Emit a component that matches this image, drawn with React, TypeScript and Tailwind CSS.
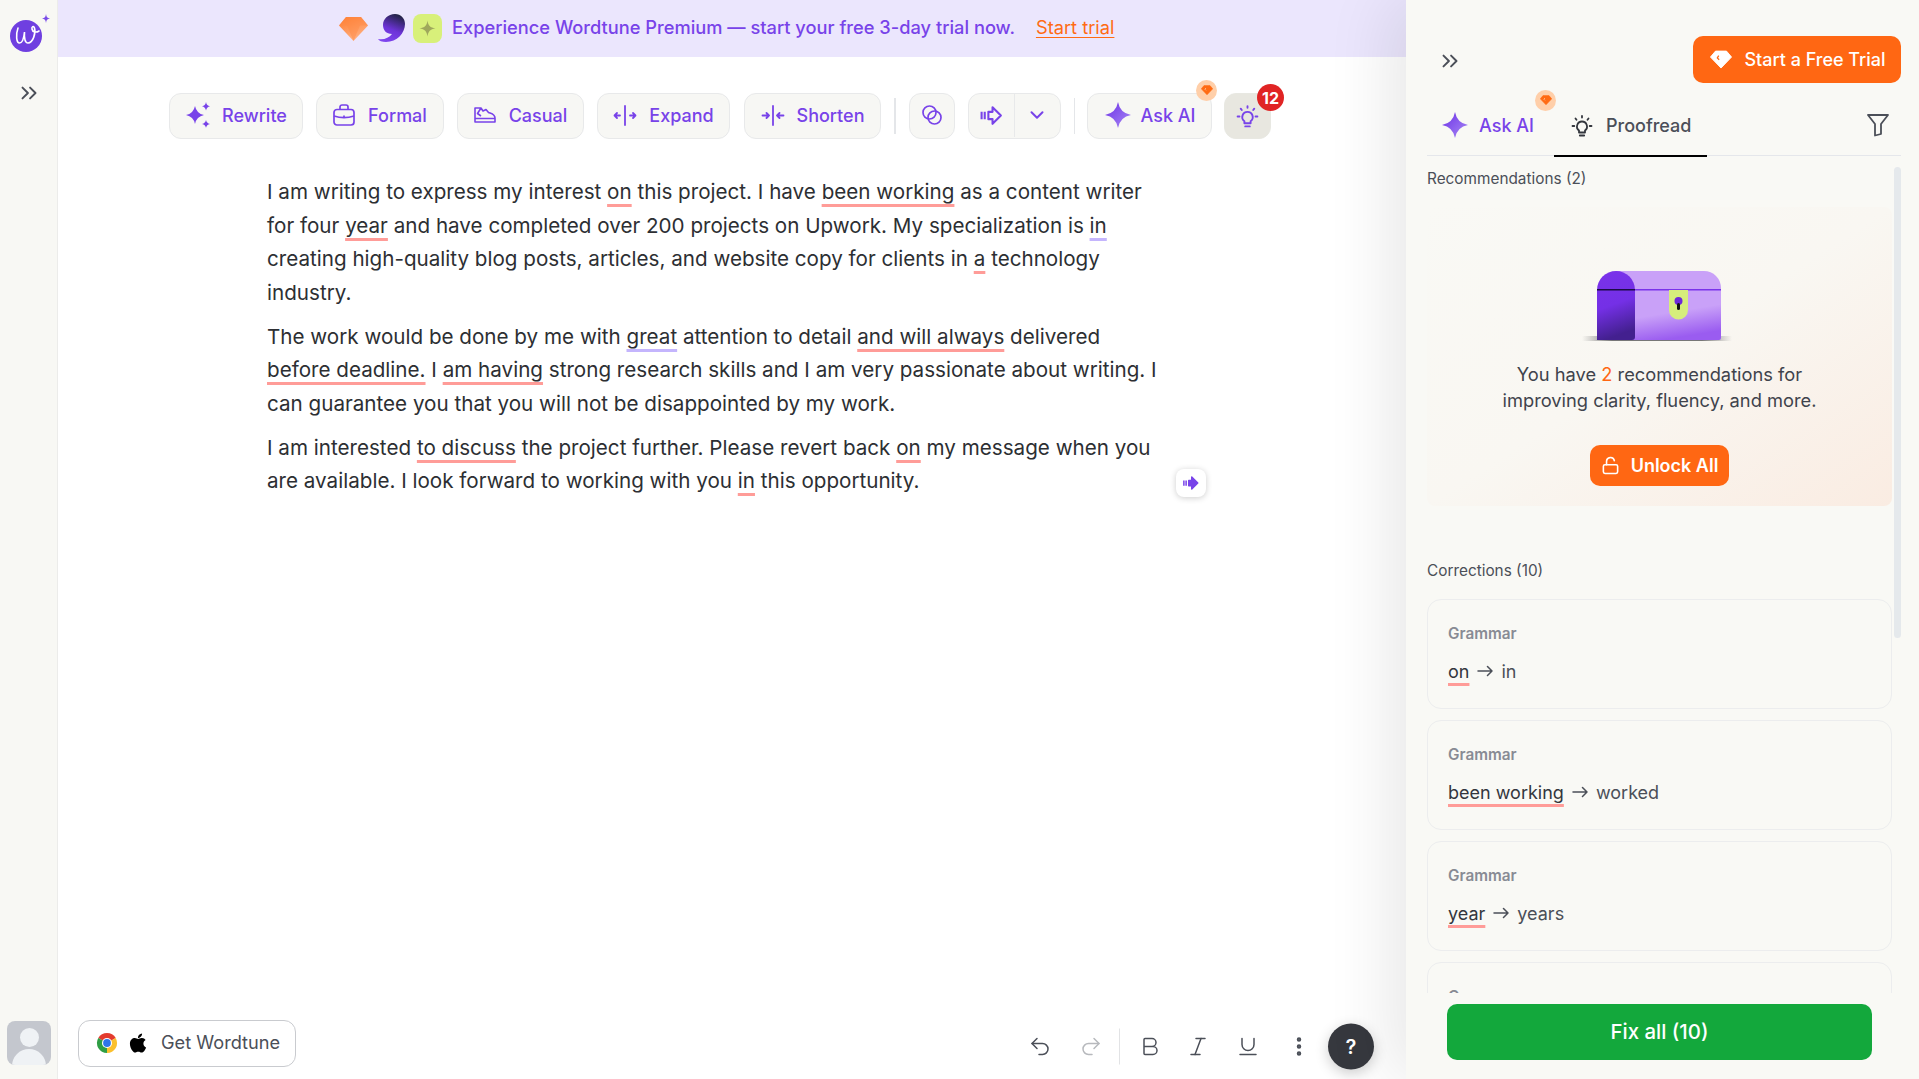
import { ChevronDown, ChevronsRight, Bold, Italic, Underline, EllipsisVertical, Undo2, Redo2, LockOpen } from 'lucide-react'
import { FaApple } from 'react-icons/fa'
import { ReactNode } from 'react'

const btn = 'flex h-[46px] items-center rounded-[12px] border border-[#e8e9ea] bg-[#f7f7f4] pb-[2px] text-[18px] font-medium text-[#7843e9]'

function Gem({ size = 24, fill = '#ff6b13', cut = '#ffd9bf' }: { size?: number; fill?: string; cut?: string }) {
  return (
    <svg width={size} height={size * 0.85} viewBox="0 0 24 20">
      <path d="M6 1h12l5.500 6.500L12 19.500.5 7.500z" fill={fill} stroke={fill} strokeLinejoin="round" />
      <path d="M9.500 6 8 8.500l2 2" fill="none" stroke={cut} strokeWidth="1.400" />
    </svg>
  )
}

function GemBadge({ className }: { className: string }) {
  return (
    <div className={`absolute flex h-[21px] w-[21px] items-center justify-center rounded-full bg-[#ffcfa9] ${className}`}>
      <Gem size={12} />
    </div>
  )
}

function Star({ size = 28, id }: { size?: number; id: string }) {
  return (
    <svg width={size} height={size} viewBox="0 0 28 28">
      <defs>
        <linearGradient id={id} x1="0" y1="0" x2="1" y2="1">
          <stop offset="0" stopColor="#6b2fe6" />
          <stop offset="1" stopColor="#a98bf5" />
        </linearGradient>
      </defs>
      <path d="M14 1Q16 12 27 14 16 16 14 27 12 16 1 14 12 12 14 1z" fill={`url(#${id})`} />
    </svg>
  )
}

function Bulb({ color, size = 24 }: { color: string; size?: number }) {
  return (
    <svg width={size} height={size} viewBox="0 0 24 24" fill="none" stroke={color} strokeWidth="1.800" strokeLinecap="round" strokeLinejoin="round">
      <path d="M12 7.500a5 5 0 0 0-3 9v2h6v-2a5 5 0 0 0-3-9z" />
      <path d="M9.800 21.500h4.400M12 2v1.600M5.500 4.500l1 1.300M18.500 4.500l-1 1.300M2.500 12h1.800M19.700 12h1.800" />
    </svg>
  )
}

function ArrowBars({ size = 24, color = '#7843e9' }: { size?: number; color?: string }) {
  return (
    <svg width={size} height={size} viewBox="0 0 24 24" fill="none" stroke={color} strokeWidth="2" strokeLinejoin="round">
      <path d="M9 8.500h4V4l8 8-8 8v-4.500H9z" />
      <path d="M2.500 8.500v7M5.500 8.500v7" />
    </svg>
  )
}

function Chest() {
  return (
    <svg className="mr-[6px]" width="150" height="70" viewBox="0 0 150 70">
      <defs>
        <linearGradient id="chestDark" x1="0" y1="0" x2="0.2" y2="1">
          <stop offset="0" stopColor="#7a32ea" />
          <stop offset="0.55" stopColor="#7430e6" />
          <stop offset="1" stopColor="#43208f" />
        </linearGradient>
        <linearGradient id="chestLight" x1="0.3" y1="0.4" x2="0.45" y2="1">
          <stop offset="0.4" stopColor="#c9a1f8" />
          <stop offset="1" stopColor="#9a5cf0" />
        </linearGradient>
        <linearGradient id="chestShade" x1="0" y1="0" x2="1" y2="0">
          <stop offset="0" stopColor="#888" stopOpacity="0" />
          <stop offset="0.2" stopColor="#777" />
          <stop offset="0.8" stopColor="#777" />
          <stop offset="1" stopColor="#888" stopOpacity="0" />
        </linearGradient>
      </defs>
      <rect x="0" y="65" width="150" height="5" fill="url(#chestShade)" />
      <path d="M34 0h88a17 17 0 0 1 17 17v50a2 2 0 0 1-2 2H34z" fill="url(#chestLight)" />
      <path d="M34 0a19 19 0 0 1 19 19v47a3 3 0 0 1-3 3H15V19A19 19 0 0 1 34 0z" fill="url(#chestDark)" />
      <rect x="15" y="18" width="38" height="1.500" fill="#1b0b45" />
      <rect x="53" y="18" width="86" height="1.500" fill="#7a32ea" />
      <path d="M87 19h19v20a9.500 9.500 0 0 1-19 0z" fill="#d6ee7c" />
      <circle cx="96.500" cy="30" r="4" fill="#6d28d9" />
      <rect x="95" y="32" width="3" height="7" rx="1.500" fill="#111" />
    </svg>
  )
}

function Logo() {
  return (
    <svg width="46" height="44" viewBox="0 0 46 44">
      <ellipse cx="18" cy="26" rx="16" ry="16" fill="#6f3fe0" />
      <path d="M10 18c-2.500 7-1.500 15 1.500 15 3 0 4.500-6 5-11-.500 6 .500 11 3.500 11 5 0 8-10 6.500-15-1-2.500-3-1.500-2.500 1 .500 3 4 4 7 2" fill="none" stroke="#fff" strokeWidth="1.600" strokeLinecap="round" />
      <path d="M38 4c.400 3 1.200 4.100 4 4.500-2.800.400-3.600 1.500-4 4.500-.400-3-1.200-4.100-4-4.500 2.800-.400 3.600-1.500 4-4.500z" fill="#7a4ce8" />
    </svg>
  )
}

function Chrome() {
  return (
    <svg width="22" height="22" viewBox="0 0 48 48">
      <path d="M24 24 4.950 13A22 22 0 0 1 43.050 13z" fill="#e33b2e" />
      <path d="M24 24 43.050 13A22 22 0 0 1 24 46z" fill="#fbc02d" />
      <path d="M24 24 24 46A22 22 0 0 1 4.950 13z" fill="#2f9e44" />
      <circle cx="24" cy="24" r="11" fill="#fff" />
      <circle cx="24" cy="24" r="8.500" fill="#2f74e8" />
    </svg>
  )
}

function Err({ children, soft }: { children: ReactNode; soft?: boolean }) {
  return (
    <span className={`underline decoration-[3px] underline-offset-[5px] [text-decoration-skip-ink:none] ${soft ? 'decoration-[#c4b5fd]' : 'decoration-[#ff9c98]'}`}>
      {children}
    </span>
  )
}

function Correction({ from, to }: { from?: string; to?: string }) {
  return (
    <div className="h-[110px] shrink-0 rounded-[14px] border border-[#ecedee] px-[20px] pt-[24px]">
      <div className="text-[15.300px] leading-[20px] font-semibold text-[#888b94]">Grammar</div>
      {from && (
        <div className="mt-[14px] flex h-[26px] items-center text-[18px] text-[#4b4f58]">
          <span className="text-[#33363d]">
            <Err>{from}</Err>
          </span>
          <svg className="mx-[8px]" width="16" height="12" viewBox="0 0 16 12" fill="none" stroke="#4b4f58" strokeWidth="1.500" strokeLinecap="round" strokeLinejoin="round">
            <path d="M1 6h14M10.500 1.500 15 6l-4.500 4.500" />
          </svg>
          <span>{to}</span>
        </div>
      )}
    </div>
  )
}

export default function App() {
  return (
    <div className="flex h-screen w-full overflow-hidden bg-white font-['Inter',sans-serif]">
      <aside className="flex w-[58px] shrink-0 flex-col items-center border-r border-[#ececea] bg-[#f8f8f4]">
        <div className="mt-[10px] ml-[5px]">
          <Logo />
        </div>
        <ChevronsRight className="mt-[26px] text-[#4b4f58]" size={26} strokeWidth={1.800} />
        <div className="relative mt-auto mb-[14px] h-[44px] w-[44px] overflow-hidden rounded-[8px] bg-[#c4c7ce]">
          <div className="absolute top-[7px] left-[13px] h-[19px] w-[19px] rounded-full bg-[#eff2f5]" />
          <div className="absolute top-[28px] left-[5px] h-[34px] w-[34px] rounded-full bg-[#eff2f5]" />
        </div>
      </aside>

      <main className="flex min-w-0 flex-1 flex-col">
        <div className="flex h-[57px] shrink-0 items-center bg-[#ebe6fd] pb-[1px] pl-[281px] text-[18.250px] font-medium text-[#7843e9]">
          <svg width="29" height="25" viewBox="0 0 29 25">
            <defs>
              <linearGradient id="gemBanner" x1="0" y1="0" x2="0.5" y2="1">
                <stop offset="0" stopColor="#ff7a2b" />
                <stop offset="1" stopColor="#ffb183" />
              </linearGradient>
            </defs>
            <path d="M7 1h15l7 8.500L14.500 25 0 9.500z" fill="url(#gemBanner)" />
            <path d="M0 9.500h29L22 1H7zM8 9.500 14.500 25 21 9.500" fill="#ff8a45" fillOpacity="0.45" />
          </svg>
          <svg className="ml-[10px]" width="27" height="28" viewBox="0 0 27 28">
            <defs>
              <linearGradient id="commaBanner" x1="0.7" y1="0" x2="0.3" y2="1">
                <stop offset="0" stopColor="#1f2240" />
                <stop offset="0.55" stopColor="#6d33d8" />
                <stop offset="1" stopColor="#7f45ef" />
              </linearGradient>
            </defs>
            <path d="M17 0c6 0 10 4.500 10 10 0 9-8 18-19 18-4 0-7-1-8-3 6 1 11-1 14-5-6 0-9-4-9-9 0-6 5-11 12-11z" fill="url(#commaBanner)" />
          </svg>
          <div className="ml-[8px] flex h-[29px] w-[29px] items-center justify-center rounded-[8px] bg-[#d8f07a]">
            <svg width="17" height="17" viewBox="0 0 28 28">
              <path d="M14 1c1 8 4.500 12 13 13-8.500 1-12 5-13 13-1-8-4.500-12-13-13 8.500-1 12-5 13-13z" fill="#9fa85c" />
            </svg>
          </div>
          <span className="ml-[10px]">Experience Wordtune Premium — start your free 3-day trial now.</span>
          <span className="ml-[21px] font-normal text-[#ff6b13] underline underline-offset-[3px]">Start trial</span>
        </div>

        <div className="mt-[36px] flex shrink-0 items-center gap-[13px] pl-[111px]">
          <button className={`${btn} w-[134px] justify-center gap-[11px]`}>
            <svg width="26" height="28" viewBox="0 0 26 28" fill="#7843e9">
              <path d="M10 5Q11.500 12.500 19 14 11.500 15.500 10 23 8.500 15.500 1 14 8.500 12.500 10 5z" />
              <path d="M21 1Q21.600 4.700 25 5.300 21.600 5.900 21 9.600 20.400 5.900 17 5.300 20.400 4.700 21 1zM21 19Q21.600 22.300 25 22.900 21.600 23.500 21 26.800 20.400 23.500 17 22.900 20.400 22.300 21 19z" />
            </svg>
            Rewrite
          </button>
          <button className={`${btn} w-[128px] justify-center gap-[13px]`}>
            <svg width="22" height="22" viewBox="0 0 22 22" fill="none" stroke="#7843e9" strokeWidth="1.700" strokeLinejoin="round">
              <rect x="1" y="5.500" width="20" height="15.500" rx="3" />
              <path d="M7 5.500V3a2 2 0 0 1 2-2h4a2 2 0 0 1 2 2v2.500M1 12c6 2 14 2 20 0M11 11.500v2.500" />
            </svg>
            Formal
          </button>
          <button className={`${btn} w-[127px] justify-center gap-[13px]`}>
            <svg width="22" height="16" viewBox="0 0 22 16" fill="none" stroke="#7843e9" strokeWidth="1.600" strokeLinejoin="round">
              <path d="M1 1h6l2 3 3-1.500 2.500 3c2 1 6.500 1.500 6.500 5.500v4H1zM1 11.500h20M7 1 3.500 6.500 7 9" />
            </svg>
            Casual
          </button>
          <button className={`${btn} w-[133px] justify-center gap-[12px]`}>
            <svg width="24" height="21" viewBox="0 0 24 21" fill="none" stroke="#7843e9" strokeWidth="1.800" strokeLinecap="round" strokeLinejoin="round">
              <path d="M12 1v19M1.500 10.500H7M1.500 10.500l2.500-2.500M1.500 10.500l2.500 2.500M22.500 10.500H17M22.500 10.500l-2.500-2.500M22.500 10.500l-2.500 2.500" />
            </svg>
            Expand
          </button>
          <button className={`${btn} ml-[1px] w-[137px] justify-center gap-[12px]`}>
            <svg width="24" height="21" viewBox="0 0 24 21" fill="none" stroke="#7843e9" strokeWidth="1.800" strokeLinecap="round" strokeLinejoin="round">
              <path d="M12 1v19M1.500 10.500H8M8 10.500 5.500 8M8 10.500 5.500 13M22.500 10.500H16M16 10.500l2.500-2.500M16 10.500l2.500 2.500" />
            </svg>
            Shorten
          </button>
          <div className="h-[36px] w-[1.500px] bg-[#e4e6e9]" />
          <button className={`${btn} w-[46px] justify-center`}>
            <svg width="22" height="22" viewBox="0 0 22 22" fill="none" stroke="#7843e9" strokeWidth="1.700">
              <circle cx="8.500" cy="8.500" r="6.500" />
              <circle cx="13.500" cy="13.500" r="6.500" />
            </svg>
          </button>
          <div className={`${btn} w-[93px]`}>
            <div className="flex h-[44px] w-[46px] items-center justify-center border-r border-[#e8e9ea]">
              <ArrowBars size={25} />
            </div>
            <div className="flex flex-1 items-center justify-center">
              <ChevronDown size={22} strokeWidth={2.200} />
            </div>
          </div>
          <div className="h-[36px] w-[1.500px] bg-[#e4e6e9]" />
          <div className="relative -ml-[1px]">
            <button className={`${btn} w-[125px] justify-center gap-[9px]`}>
              <Star id="starBar" />
              Ask AI
            </button>
            <GemBadge className="-top-[13px] right-[-5px]" />
          </div>
          <div className="relative -ml-[1px] flex h-[46px] w-[47px] items-center justify-center rounded-[12px] border border-[#e8e8e2] bg-[#e8e7e0]">
            <Bulb color="#7843e9" size={25} />
            <div className="absolute -top-[10px] -right-[14px] flex h-[27px] w-[27px] items-center justify-center rounded-full bg-[#e02424] text-[16px] font-bold text-white">12</div>
          </div>
        </div>

        <div className="relative min-h-0 flex-1 pt-[36px] pl-[209px] text-[20.630px] leading-[33.500px] text-[#2d2f33]">
          <div className="w-[893px]">
            <p className="mb-[10.500px]">
              I am writing to express my interest <Err>on</Err> this project. I have <Err>been working</Err> as a content writer for four <Err>year</Err> and have completed over 200 projects on Upwork. My specialization is <Err soft>in</Err> creating high-quality blog posts, articles, and website copy for clients in <Err>a</Err> technology industry.
            </p>
            <p className="mb-[10.500px]">
              The work would be done by me with <Err soft>great</Err> attention to detail <Err>and will always</Err> delivered <Err>before deadline.</Err> I <Err>am having</Err> strong research skills and I am very passionate about writing. I can guarantee you that you will not be disappointed by my work.
            </p>
            <p>
              I am interested <Err>to discuss</Err> the project further. Please revert back <Err>on</Err> my message when you are available. I look forward to working with you <Err>in</Err> this opportunity.
            </p>
          </div>
          <div className="absolute top-[330px] left-[1118px] flex h-[28px] w-[30px] items-center justify-center rounded-[8px] bg-white shadow-[0_1px_6px_rgba(0,0,0,0.2)]">
            <svg width="18" height="18" viewBox="0 0 24 24" fill="#7843e9" stroke="#7843e9" strokeWidth="2" strokeLinejoin="round">
              <path d="M9 8.500h4V4l8 8-8 8v-4.500H9z" />
              <path d="M2.500 8.500v7M5.500 8.500v7" fill="none" />
            </svg>
          </div>
        </div>

        <div className="flex shrink-0 items-center pr-[32px] pb-[12px] pl-[20px]">
          <button className="flex h-[47px] w-[218px] items-center rounded-[12px] border border-[#c9cbcf] bg-white pb-[1px] pl-[17px] text-[18.200px] text-[#4b4f58]">
            <Chrome />
            <FaApple className="ml-[9px] text-black" size={22} />
            <span className="ml-[12px]">Get Wordtune</span>
          </button>
          <div className="ml-auto flex translate-y-[2.500px] items-center text-[#4b4f58]">
            <Undo2 className="translate-x-[1px]" size={24} strokeWidth={1.500} />
            <Redo2 className="ml-[28px] text-[#b7b9bd]" size={24} strokeWidth={1.500} />
            <div className="ml-[16px] h-[36px] w-px bg-[#e2e3e5]" />
            <Bold className="ml-[18px]" size={24} strokeWidth={1.500} />
            <Italic className="ml-[24px]" size={24} strokeWidth={1.500} />
            <Underline className="ml-[26px]" size={24} strokeWidth={1.500} />
            <EllipsisVertical className="ml-[27px]" size={24} strokeWidth={2.500} />
            <div className="ml-[17px] flex h-[46px] w-[46px] items-center justify-center rounded-full bg-[#36383e] text-[20px] font-semibold text-white shadow-[0_4px_14px_rgba(0,0,0,0.2)]">?</div>
          </div>
        </div>
      </main>

      <aside className="relative z-10 flex w-[513px] shrink-0 flex-col bg-[#f9f9f5] pr-[18px] pl-[21px] shadow-[-18px_0_60px_rgba(0,0,0,0.09)]">
        <div className="flex h-[100px] shrink-0 items-start justify-between pt-[36px]">
          <ChevronsRight className="mt-[12px] ml-[10px] text-[#4b4f58]" size={26} strokeWidth={1.800} />
          <button className="flex h-[47px] w-[208px] items-center justify-center gap-[12px] rounded-[10px] bg-[#ff6713] pl-[2px] text-[18px] font-medium text-white">
            <Gem size={22} fill="#fff" cut="#ff6713" />
            Start a Free Trial
          </button>
        </div>
        <div className="relative flex h-[56px] shrink-0 border-b border-[#e5e7eb] text-[18px]">
          <div className="relative flex w-[127px] items-center gap-[10px] pb-[5px] pl-[14px] font-medium text-[#7843e9]">
            <Star id="starTab" />
            Ask AI
            <GemBadge className="top-[-10px] right-[-2px]" />
          </div>
          <div className="-mb-[2px] flex h-[57px] w-[153px] items-center gap-[12px] border-b-2 border-black pb-[4px] pl-[16px] font-medium text-[#4b4f58]">
            <Bulb color="#33363d" size={24} />
            Proofread
          </div>
          <svg className="mt-[13px] mr-[12px] ml-auto" width="22" height="24" viewBox="0 0 22 24" fill="none" stroke="#4b4f58" strokeWidth="1.800" strokeLinejoin="round">
            <path d="M1 2h20l-7 9v10l-6 1.500V11z" />
          </svg>
        </div>

        <div className="relative min-h-0 flex-1 overflow-hidden pr-[9px]">
          <div className="absolute top-[11px] right-0 h-[471px] w-[7px] rounded-full bg-[#e5e9ec]" />
          <div className="pt-[13px] text-[15.350px] leading-[20px] text-[#4b4f58]">Recommendations (2)</div>
          <div className="mt-[18px] flex flex-col items-center rounded-[8px] bg-gradient-to-br from-[#f9f9f5] via-[#f9f7f2] to-[#faece2] pt-[64px] pb-[20px]">
            <Chest />
            <p className="mt-[20px] text-center text-[18.300px] leading-[26px] text-[#3f434c]">
              You have <span className="text-[#ff6713]">2</span> recommendations for
              <br />
              improving clarity, fluency, and more.
            </p>
            <button className="mt-[32px] flex h-[41px] w-[139px] items-center justify-center gap-[11px] rounded-[10px] bg-[#ff6713] text-[18px] font-semibold text-white">
              <LockOpen size={19} strokeWidth={2} />
              Unlock All
            </button>
          </div>
          <div className="mt-[55px] text-[15.350px] leading-[20px] text-[#4b4f58]">Corrections (10)</div>
          <div className="mt-[18px] flex flex-col gap-[11px]">
            <Correction from="on" to="in" />
            <Correction from="been working" to="worked" />
            <Correction from="year" to="years" />
            <Correction />
          </div>
        </div>

        <div className="flex h-[86px] shrink-0 items-start justify-center pt-[11px] pr-[9px]">
          <button className="h-[56px] w-[425px] rounded-[10px] bg-[#13a83c] text-[20.400px] font-medium text-white">Fix all (10)</button>
        </div>
      </aside>
    </div>
  )
}
